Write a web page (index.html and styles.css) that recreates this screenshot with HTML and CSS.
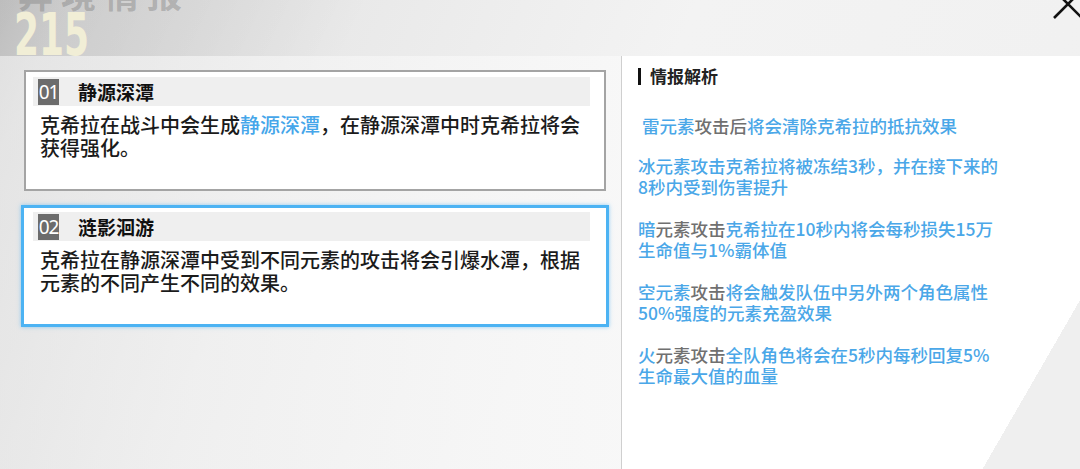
FILE: index.html
```html
<!DOCTYPE html>
<html>
<head>
    <meta charset="utf-8">
    <title>异境情报</title>
    <link rel="stylesheet" href="styles.css">
</head>
<body>

<div class="screen">
    <header class="banner">
        <h1 class="banner-title">异境情报</h1>
        <div class="banner-no">215</div>
    </header>

    <button class="close" aria-label="关闭">
        <svg width="40" height="40" viewBox="0 0 40 40">
            <path d="M6 6 L34 34 M34 6 L6 34" stroke="#111" stroke-width="2.6" fill="none"/>
        </svg>
    </button>

    <main class="panel">
        <section class="skills">
            <div class="card">
                <div class="card-head">
                    <span class="badge">01</span>
                    <span class="card-title">静源深潭</span>
                </div>
                <p class="card-text">克希拉在战斗中会生成<span class="hl">静源深潭</span>，在静源深潭中时克希拉将会获得强化。</p>
            </div>

            <div class="card active">
                <div class="card-head">
                    <span class="badge">02</span>
                    <span class="card-title">涟影洄游</span>
                </div>
                <p class="card-text">克希拉在静源深潭中受到不同元素的攻击将会引爆水潭，根据元素的不同产生不同的效果。</p>
            </div>
        </section>

        <aside class="intel">
            <h2 class="intel-title">情报解析</h2>
            <ul class="intel-list">
                <li class="lead">雷元素<span class="dim">攻击后</span>将会清除克希拉的抵抗效果</li>
                <li>冰元素攻击克希拉将被冻结3秒，并在接下来的<br>8秒内受到伤害提升</li>
                <li>暗<span class="dim">元素攻击</span>克希拉在10秒内将会每秒损失15万<br>生命值与1%霸体值</li>
                <li>空元素<span class="dim">攻击</span>将会触发队伍中另外两个角色属性<br>50%强度的元素充盈效果</li>
                <li>火<span class="dim">元素攻击</span>全队角色将会在5秒内每秒回复5%<br>生命最大值的血量</li>
            </ul>
        </aside>
    </main>
</div>

</body>
</html>
```

FILE: styles.css
```css
body, html {
    margin: 0;
    padding: 0;
    font-family: "Noto Sans CJK SC", "Noto Sans", sans-serif;
}

.screen {
    position: relative;
    width: 1080px;
    height: 469px;
    overflow: hidden;
    background: linear-gradient(112deg, #c9c9c9 0%, #d6d6d6 5%, #e9e9e9 28%, #f3f3f3 55%, #f0f0f0 100%);
}

/* top banner */
.banner {
    display: flow-root;
    height: 56px;
    padding-left: 18px;
    background: linear-gradient(115deg, rgba(0, 0, 0, 0.06) 0%, rgba(0, 0, 0, 0.03) 18%, rgba(255, 255, 255, 0) 34%);
}

.banner-title {
    margin: -25px 0 0 0;
    font-size: 35px;
    line-height: 36px;
    letter-spacing: 8px;
    font-weight: bold;
    color: rgba(120, 120, 120, 0.4);
}

.banner-no {
    margin: 0 0 0 -4px;
    font-family: "DejaVu Sans", sans-serif;
    font-weight: bold;
    font-size: 58px;
    line-height: 48px;
    color: #f1eed6;
    transform: scaleX(0.62);
    transform-origin: left center;
}

.close {
    position: absolute;
    top: -16px;
    left: 1048px;
    width: 40px;
    height: 40px;
    padding: 0;
    border: 0;
    background: none;
}

/* panel */
.panel {
    display: grid;
    grid-template-columns: 621px 1fr;
    height: 413px;
}

.skills {
    padding-top: 14px;
    background: linear-gradient(90deg, rgba(238, 238, 238, 0.6), rgba(248, 248, 248, 0.9));
}

.card {
    box-sizing: border-box;
    width: 582px;
    height: 121px;
    margin-left: 24px;
    padding: 5px 14px 0 7px;
    background-color: #fff;
    border: 2px solid #a4a4a4;
}

.card.active {
    width: 588px;
    height: 122px;
    margin: 14px 0 0 21px;
    padding: 4px 16px 0 9px;
    border: 3px solid #4cb3f3;
    box-shadow: 0 0 4px rgba(76, 179, 243, 0.6);
}

.card-head {
    display: flex;
    align-items: center;
    height: 29px;
    padding-left: 5px;
    background-color: #efefef;
}

.badge {
    width: 21px;
    height: 26px;
    background-color: #6c6c6c;
    color: #fff;
    font-family: "Noto Sans", sans-serif;
    font-size: 19px;
    letter-spacing: -1px;
    line-height: 26px;
    text-align: center;
}

.card-title {
    margin-left: 19px;
    font-size: 19px;
    font-weight: bold;
    color: #111;
}

.card-text {
    margin: 7px 0 0 7px;
    font-size: 20px;
    font-weight: 500;
    line-height: 23px;
    color: #1b1b1b;
}

.hl {
    color: #45a6ea;
}

/* right column */
.intel {
    padding-left: 16px;
    border-left: 1px solid #cfcfcf;
    background: linear-gradient(120deg, #fff 86%, #efefef 86%);
}

.intel-title {
    display: flex;
    align-items: center;
    margin: 8px 0 0 0;
    font-size: 17px;
    line-height: 24px;
    color: #222;
}

.intel-title::before {
    content: "";
    width: 3px;
    height: 17px;
    margin-right: 9px;
    background-color: #111;
}

.intel-list {
    list-style: none;
    margin: 25px 0 0 0;
    padding: 0;
    font-size: 17.5px;
    font-weight: 500;
    line-height: 21px;
    color: #4aa7e8;
    white-space: nowrap;
}

.intel-list li {
    margin-bottom: 21px;
}

.intel-list li.lead {
    padding: 2px 0 0 4px;
    margin-bottom: 19px;
}

.dim {
    color: #707070;
}
```
